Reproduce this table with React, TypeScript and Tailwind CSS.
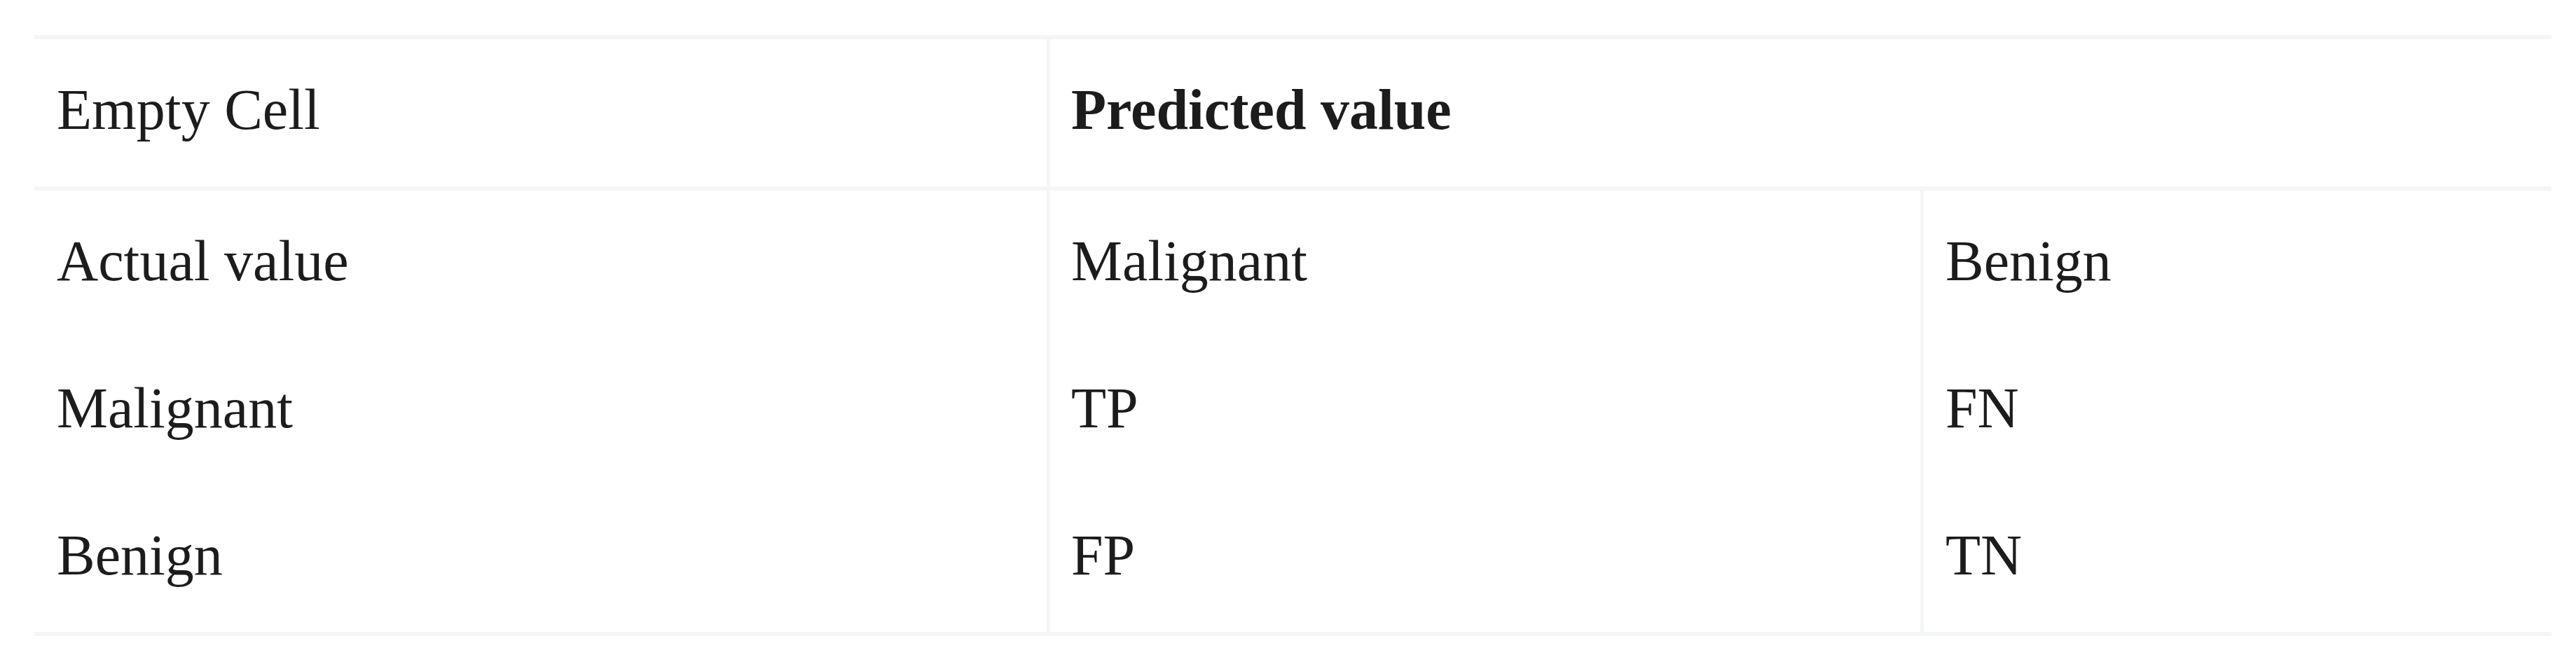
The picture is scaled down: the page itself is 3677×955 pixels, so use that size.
import React from "react";

const font = { fontFamily: '"Liberation Serif", "Times New Roman", serif' };

function Cell({
  children,
  className = "",
}: {
  children?: React.ReactNode;
  className?: string;
}) {
  return (
    <div
      className={
        "h-[210px] pt-[39px] pb-[48px] text-[82px] leading-[123px] text-[#1c1c1c] whitespace-nowrap " +
        className
      }
    >
      {children}
    </div>
  );
}

export default function App() {
  const rows: [string, string, string][] = [
    ["Actual value", "Malignant", "Benign"],
    ["Malignant", "TP", "FN"],
    ["Benign", "FP", "TN"],
  ];
  return (
    <div className="min-h-[955px] w-[3677px] bg-white pt-[50px] pl-[49px]" style={font}>
      <div className="w-[3593px] border-y-[6px] border-[#f4f5f5]">
        <div className="flex border-b-[6px] border-[#f4f5f5]">
          <Cell className="w-[1445px] pl-[32px]">Empty Cell</Cell>
          <Cell className="flex-1 border-l-[5px] border-[#f4f5f5] pl-[30px] font-bold">
            Predicted value
          </Cell>
        </div>
        {rows.map((r, i) => (
          <div key={i} className="flex">
            <Cell className="w-[1445px] pl-[32px]">{r[0]}</Cell>
            <Cell className="w-[1247px] border-l-[5px] border-[#f4f5f5] pl-[30px]">{r[1]}</Cell>
            <Cell className="flex-1 border-l-[5px] border-[#f4f5f5] pl-[31px]">{r[2]}</Cell>
          </div>
        ))}
      </div>
    </div>
  );
}
